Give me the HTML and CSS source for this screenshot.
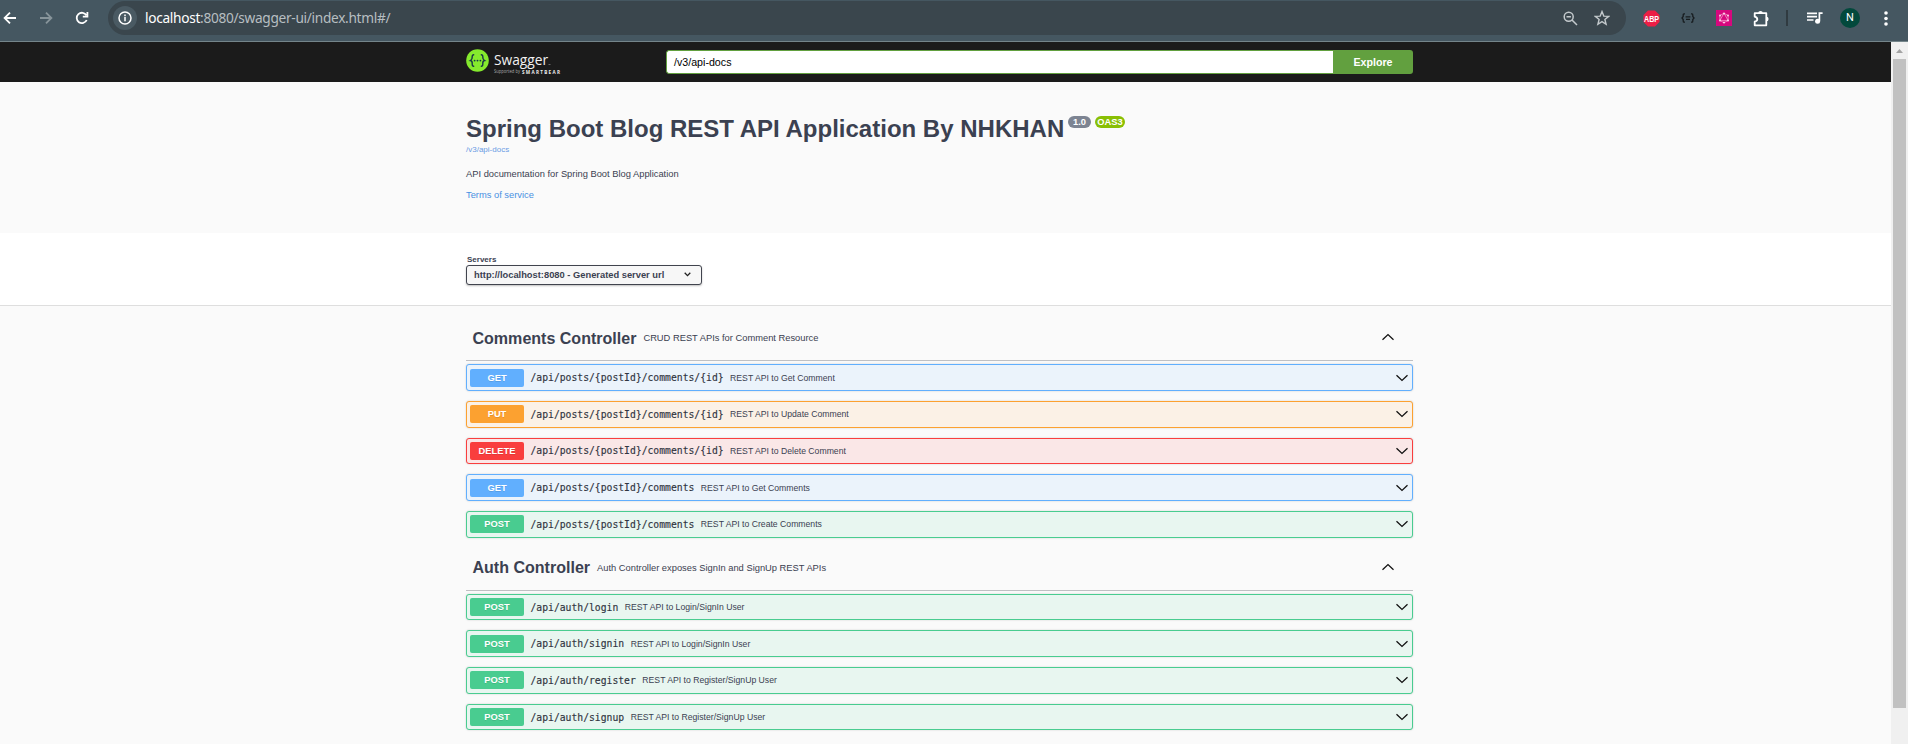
FILE: index.html
```html
<!DOCTYPE html>
<html lang="en">
<head>
<meta charset="utf-8">
<title>Swagger UI</title>
<link rel="stylesheet" href="styles.css">
</head>
<body>
<svg class="defs" width="0" height="0">
  <symbol id="down" viewBox="0 0 14 8"><path d="M1.5 1.2L7 6.4L12.5 1.2" fill="none" stroke="#111" stroke-width="1.3"/></symbol>
  <symbol id="up" viewBox="0 0 14 8"><path d="M1.5 6.8L7 1.6L12.5 6.8" fill="none" stroke="#111" stroke-width="1.3"/></symbol>
</svg>
<header class="browser">
  <svg class="nav back" width="14" height="14" viewBox="0 0 14 14"><path d="M13 7H2M7 1.6L1.6 7L7 12.4" /></svg>
  <svg class="nav forward" width="14" height="14" viewBox="0 0 14 14"><path d="M1 7h11M7 1.6L12.4 7L7 12.4" /></svg>
  <svg class="nav reload" width="14" height="14" viewBox="0 0 14 14"><path d="M11.7 9A5.2 5.2 0 1 1 11.4 4.3M12.4 1v4.6H7.8" /></svg>
  <div class="omnibox">
    <span class="info-chip"><svg width="14" height="14" viewBox="0 0 14 14"><circle cx="7" cy="7" r="6" fill="none" stroke="#fff" stroke-width="1.5"/><path d="M7 6v4.3M7 3.6v1.6" stroke="#fff" stroke-width="1.5"/></svg></span>
    <span class="url"><b>localhost</b>:8080/swagger-ui/index.html#/</span>
    <svg class="magnify" width="15" height="15" viewBox="0 0 15 15"><g fill="none" stroke="#c3c9cc" stroke-width="1.5"><circle cx="5.7" cy="5.7" r="4.5"/><path d="M9 9l5 5M3.5 5.7h4.4"/></g></svg>
    <svg class="star" width="16" height="16" viewBox="0 0 16 16"><path d="M8 1.6l1.8 4.5 4.8.3-3.7 3.1 1.2 4.8L8 11.7l-4.1 2.6 1.2-4.8L1.4 6.4l4.8-.3z" fill="none" stroke="#c3c9cc" stroke-width="1.4"/></svg>
  </div>
  <div class="extensions">
    <svg class="abp" width="17" height="17" viewBox="0 0 17 17"><path d="M5 0.5h7L16.5 5v7L12 16.5H5L.5 12V5z" fill="#ed1e45"/><text x="8.5" y="11.6" text-anchor="middle" textLength="15" lengthAdjust="spacingAndGlyphs">ABP</text></svg>
    <svg class="braces" width="14" height="10" viewBox="0 0 14 10"><path d="M4 .8H3Q2.2.8 2.2 2v1.5L1 5l1.2 1.5V8Q2.2 9.2 3 9.2h1M10 .8h1q.8 0 .8 1.2v1.5L13 5l-1.2 1.5V8q0 1.2-.8 1.2h-1M4.6 3.8h4.8M5 6.4h4" fill="none" stroke="#171c1f" stroke-width="1.3"/></svg>
    <svg class="graph" width="16" height="16" viewBox="0 0 16 16"><path fill="#d6087e" d="M0 0h16v16H0z"/><path d="M8 3.2l4.1 2.4v4.8L8 12.8l-4.1-2.4V5.6zM8 3.2l4.1 7.2H3.9z" fill="none" stroke="#f59aca" stroke-width=".8"/><g fill="#fbd3e9"><circle cx="8" cy="3.5" r="1"/><circle cx="12" cy="5.6" r="1"/><circle cx="12" cy="10.4" r="1"/><circle cx="8" cy="12.5" r="1"/><circle cx="4" cy="10.4" r="1"/><circle cx="4" cy="5.6" r="1"/></g></svg>
    <svg class="puzzle" width="17" height="17" viewBox="0 0 17 17"><path d="M1.7 3.2H13.3V15.3H1.7V11.7Q4.3 11 4.3 9.2T1.7 6.7Z" fill="none" stroke="#fff" stroke-width="1.8" stroke-linejoin="round"/><path d="M5.2 3.2a2.3 2.3 0 0 1 4.6 0zM13.3 6.8a2.3 2.3 0 0 1 0 4.6z" fill="#fff"/></svg>
    <i class="divider"></i>
    <svg class="queue" width="16" height="12" viewBox="0 0 16 12"><path d="M0 1.3h10M0 4.7h10M0 8h6.5M15.6 1.1H12.4V9" fill="none" stroke="#fff" stroke-width="1.7"/><circle cx="10.6" cy="9.2" r="2.5" fill="#fff"/></svg>
    <span class="avatar">N</span>
    <svg class="more" width="4" height="15" viewBox="0 0 4 15"><g fill="#fff"><circle cx="2" cy="2" r="1.8"/><circle cx="2" cy="7.5" r="1.8"/><circle cx="2" cy="13" r="1.8"/></g></svg>
  </div>
</header>
<div class="viewport">
<main class="page">
  <div class="topbar"><div class="wrap topbar-row">
    <svg class="logo" width="98" height="27" viewBox="0 0 98 27">
      <circle cx="11.5" cy="11.5" r="11.3" fill="#85ea2d"/>
      <path d="M8.2 5.8Q6 5.6 6.2 8T4.5 11.5Q6.4 11.8 6.2 14.7T8.2 17.2M14.8 5.8q2.2-.2 2 2.2t1.7 3.5q-1.9.3-1.7 3.2t-2 2.5" fill="none" stroke="#173647" stroke-width="1.4"/>
      <g fill="#173647"><circle cx="8.6" cy="11.6" r=".9"/><circle cx="11.5" cy="11.6" r=".9"/><circle cx="14.4" cy="11.6" r=".9"/></g>
      <text class="brand" x="28" y="15.5" textLength="54" lengthAdjust="spacingAndGlyphs">Swagger</text>
      <path d="M82.5 15.5h2" stroke="#888" stroke-width=".7"/>
      <text class="by" x="28" y="24.3" textLength="26" lengthAdjust="spacingAndGlyphs">Supported by</text>
      <text class="bear" x="56" y="24.6" textLength="38">SMARTBEAR</text>
    </svg>
    <div class="search"><div class="field">/v3/api-docs</div><div class="explore">Explore</div></div>
  </div></div>
  <section class="info wrap">
    <div class="title-row"><h1>Spring Boot Blog REST API Application By NHKHAN</h1><span class="pill version">1.0</span><span class="pill oas">OAS3</span></div>
    <a class="spec">/v3/api-docs</a>
    <p class="desc">API documentation for Spring Boot Blog Application</p>
    <a class="terms">Terms of service</a>
  </section>
  <section class="schemes"><div class="wrap">
    <div class="servers">Servers</div>
    <div class="select"><span>http://localhost:8080 - Generated server url</span><svg width="7" height="5" viewBox="0 0 7 5"><path d="M.7.7l2.8 2.9L6.3.7" fill="none" stroke="#222" stroke-width="1.3"/></svg></div>
  </div></section>
  <div class="wrap tags">
    <section class="tag">
      <h2 class="tag-head"><span>Comments Controller</span><small>CRUD REST APIs for Comment Resource</small><svg class="arrow"><use href="#up"/></svg></h2>
      <div class="op get"><span class="method">GET</span><code>/api/posts/{postId}/comments/{id}</code><span class="sum">REST API to Get Comment</span><svg class="arrow"><use href="#down"/></svg></div>
      <div class="op put"><span class="method">PUT</span><code>/api/posts/{postId}/comments/{id}</code><span class="sum">REST API to Update Comment</span><svg class="arrow"><use href="#down"/></svg></div>
      <div class="op delete"><span class="method">DELETE</span><code>/api/posts/{postId}/comments/{id}</code><span class="sum">REST API to Delete Comment</span><svg class="arrow"><use href="#down"/></svg></div>
      <div class="op get"><span class="method">GET</span><code>/api/posts/{postId}/comments</code><span class="sum">REST API to Get Comments</span><svg class="arrow"><use href="#down"/></svg></div>
      <div class="op post"><span class="method">POST</span><code>/api/posts/{postId}/comments</code><span class="sum">REST API to Create Comments</span><svg class="arrow"><use href="#down"/></svg></div>
    </section>
    <section class="tag">
      <h2 class="tag-head"><span>Auth Controller</span><small>Auth Controller exposes SignIn and SignUp REST APIs</small><svg class="arrow"><use href="#up"/></svg></h2>
      <div class="op post"><span class="method">POST</span><code>/api/auth/login</code><span class="sum">REST API to Login/SignIn User</span><svg class="arrow"><use href="#down"/></svg></div>
      <div class="op post"><span class="method">POST</span><code>/api/auth/signin</code><span class="sum">REST API to Login/SignIn User</span><svg class="arrow"><use href="#down"/></svg></div>
      <div class="op post"><span class="method">POST</span><code>/api/auth/register</code><span class="sum">REST API to Register/SignUp User</span><svg class="arrow"><use href="#down"/></svg></div>
      <div class="op post"><span class="method">POST</span><code>/api/auth/signup</code><span class="sum">REST API to Register/SignUp User</span><svg class="arrow"><use href="#down"/></svg></div>
    </section>
  </div>
</main>
<aside class="scrollbar"><svg width="7" height="4" viewBox="0 0 7 4"><path d="M3.5 0L7 4H0z" fill="#a3a3a3"/></svg><div class="thumb"></div></aside>
</div>
</body>
</html>
```

FILE: styles.css
```css
* { box-sizing: border-box; }
body { margin: 0; height: 744px; overflow: hidden; display: flex; flex-direction: column; font-family: "Liberation Sans", Arial, sans-serif; color: #3b4151; background: #fafafa; }
.defs { display: none; }
svg { display: block; flex: none; }

/* browser chrome */
.browser { height: 42px; flex: none; display: flex; align-items: flex-start; background: #455761; border-bottom: 1px solid #74858a; }
.nav { fill: none; stroke: #fff; stroke-width: 1.8; margin-top: 11px; }
.back { margin-left: 3px; }
.forward { margin-left: 22px; stroke: #87949a; }
.reload { margin-left: 22px; }
.omnibox { margin: 1px 0 0 19px; width: 1518px; height: 34px; border-radius: 17px; background: #3a464d; display: flex; align-items: center; padding: 0 16px 0 5px; }
.info-chip { width: 24px; height: 24px; border-radius: 50%; background: #4a5a63; display: grid; place-items: center; }
.url { margin: 0 auto 0 8px; font: 13.7px/20px "Noto Sans", sans-serif; color: #b7bec1; letter-spacing: -0.31px; white-space: nowrap; }
.url b { font-weight: 400; color: #fff; }
.star { margin-left: 16px; }
.extensions { display: flex; align-items: center; height: 36px; margin-left: 17px; }
.abp text { font: bold 8.5px "Liberation Sans", sans-serif; fill: #fff; }
.braces { margin-left: 21px; }
.graph { margin-left: 21px; }
.puzzle { margin-left: 21px; }
.divider { margin-left: 16px; width: 2px; height: 16px; background: #303b41; }
.queue { margin-left: 19px; }
.avatar { margin-left: 17px; width: 20px; height: 20px; border-radius: 50%; background: #02493c; color: #fff; font: 11px/20px Roboto, sans-serif; text-align: center; }
.more { margin-left: 24px; }

.viewport { flex: 1; display: flex; min-height: 0; }
.page { width: 1891px; overflow: hidden; }
.scrollbar { width: 17px; background: #f0f0f0; display: flex; flex-direction: column; align-items: center; padding-top: 7px; }
.thumb { margin-top: 6px; width: 13px; height: 649px; background: #c1c1c1; }
.wrap { width: 947px; margin-left: 466px; }

.topbar { height: 40px; background: #1b1b1b; }
.topbar-row { display: flex; padding-top: 7px; }
.brand { font: 400 14.5px "Open Sans", sans-serif; fill: #f2f2f2; }
.by { font: 4.4px "Open Sans", sans-serif; fill: #aaa; }
.bear { font: bold 4.6px "Open Sans", sans-serif; fill: #eee; }
.search { display: flex; margin: 0 0 0 102px; height: 24px; border-radius: 3px; overflow: hidden; margin-top: 1px; }
.field { width: 667px; background: #fff; border: 1px solid #62a03f; border-right: 0; border-radius: 3px 0 0 3px; padding-left: 7px; font-size: 10.67px; line-height: 22px; color: #000; }
.explore { width: 80px; background: #62a03f; color: #fff; font-weight: bold; font-size: 10.67px; line-height: 24px; text-align: center; }

.info { height: 151px; padding-top: 33px; }
.title-row { display: flex; height: 28px; align-items: flex-start; }
h1 { margin: 0; width: 602px; font-size: 24px; line-height: 28px; white-space: nowrap; }
.pill { margin-top: 1px; height: 12px; border-radius: 6px; color: #fff; font-weight: bold; font-size: 9.33px; line-height: 12px; text-align: center; background: #7d8492; }
.version { width: 23px; }
.oas { width: 30px; margin-left: 4px; background: #89bf04; }
.spec { display: block; font-size: 8px; line-height: 10px; margin-top: 2px; color: #6a9be4; }
.desc { margin: 12px 0 0; font-size: 9.33px; line-height: 14px; }
.terms { display: block; margin-top: 7px; font-size: 9.33px; line-height: 14px; color: #4990e2; }

.schemes { height: 73px; background: #fff; border-bottom: 1px solid #dedede; padding-top: 22px; }
.servers { padding-left: 1px; font-weight: bold; font-size: 8px; line-height: 10px; }
.select { width: 236px; height: 20px; border: 1px solid #41444e; border-radius: 3px; background: #f7f7f7; box-shadow: 0 1px 2px rgba(0,0,0,.25); display: flex; align-items: center; justify-content: space-between; padding: 0 10px 1px 7px; font-weight: bold; font-size: 9.33px; white-space: nowrap; }

.tag { margin-bottom: 10.9px; }
.tags { padding-top: 13px; }
.tag-head { margin: 0 0 3.33px; height: 42px; border-bottom: 1px solid #bfc0c3; display: flex; align-items: center; padding: 0 18px 3px 6.5px; font-size: 16.05px; }
.tag-head small { font-weight: 400; font-size: 9.33px; margin-left: 7px; }
.arrow { width: 14px; height: 8px; margin-left: auto; }
.tag-head .arrow { margin-bottom: 2px; }
.op { height: 26.67px; margin-bottom: 10px; border: 1px solid; border-radius: 3px; box-shadow: 0 0 2px rgba(0,0,0,.19); display: flex; align-items: center; padding: 0 4px 0 3px; white-space: nowrap; }
.method { width: 54px; height: 18px; border-radius: 2px; color: #fff; font-weight: bold; font-size: 9.33px; line-height: 18px; text-align: center; text-shadow: 0 1px 0 rgba(0,0,0,.1); }
.op .arrow { margin-right: -1px; }
.op code { margin-left: 6.5px; font: 9.72px "DejaVu Sans Mono", monospace; color: #30343f; -webkit-text-stroke: .15px #30343f; }
.sum { margin-left: 6.5px; font-size: 8.67px; }
.get { border-color: #61affe; background: #ebf3fb; }
.get .method { background: #61affe; }
.put { border-color: #fca130; background: #fbf1e6; }
.put .method { background: #fca130; }
.delete { border-color: #f93e3e; background: #fae7e7; }
.delete .method { background: #f93e3e; }
.post { border-color: #49cc90; background: #e8f6f0; }
.post .method { background: #49cc90; }
```
